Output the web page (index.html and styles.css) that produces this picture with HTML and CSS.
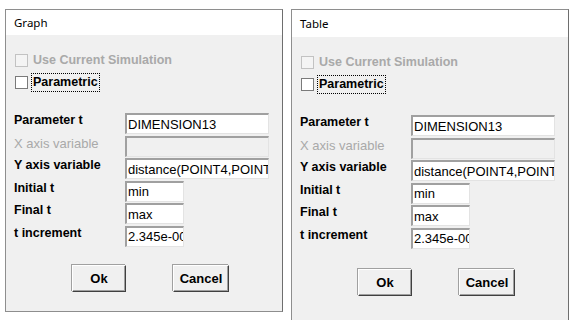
FILE: index.html
```html
<!DOCTYPE html>
<html lang="en">
<head>
    <meta charset="UTF-8">
    <title>Graph / Table</title>
    <link rel="stylesheet" href="styles.css">
</head>
<body>
    <div class="desk">
        <div class="dialog graph">
            <div class="titlebar">Graph</div>
            <div class="body">
                <div class="check disabled"><span class="box"></span><span>Use Current Simulation</span></div>
                <div class="check"><span class="box"></span><span class="focus">Parametric</span></div>
                <div class="fields">
                    <span class="lbl">Parameter t</span>
                    <input class="field" type="text" value="DIMENSION13">
                    <span class="lbl disabled">X axis variable</span>
                    <input class="field off" type="text" value="" disabled>
                    <span class="lbl">Y axis variable</span>
                    <input class="field" type="text" value="distance(POINT4,POINT5)">
                    <span class="lbl">Initial t</span>
                    <input class="field short" type="text" value="min">
                    <span class="lbl">Final t</span>
                    <input class="field short" type="text" value="max">
                    <span class="lbl">t increment</span>
                    <input class="field short" type="text" value="2.345e-005">
                </div>
                <div class="buttons">
                    <button class="btn ok">Ok</button>
                    <button class="btn cancel">Cancel</button>
                </div>
            </div>
        </div>

        <div class="dialog table">
            <div class="titlebar">Table</div>
            <div class="body">
                <div class="check disabled"><span class="box"></span><span>Use Current Simulation</span></div>
                <div class="check"><span class="box"></span><span class="focus">Parametric</span></div>
                <div class="fields">
                    <span class="lbl">Parameter t</span>
                    <input class="field" type="text" value="DIMENSION13">
                    <span class="lbl disabled">X axis variable</span>
                    <input class="field off" type="text" value="" disabled>
                    <span class="lbl">Y axis variable</span>
                    <input class="field" type="text" value="distance(POINT4,POINT5)">
                    <span class="lbl">Initial t</span>
                    <input class="field short" type="text" value="min">
                    <span class="lbl">Final t</span>
                    <input class="field short" type="text" value="max">
                    <span class="lbl">t increment</span>
                    <input class="field short" type="text" value="2.345e-005">
                </div>
                <div class="buttons">
                    <button class="btn ok">Ok</button>
                    <button class="btn cancel">Cancel</button>
                </div>
            </div>
        </div>
    </div>
</body>
</html>
```

FILE: styles.css
```css
body {
    margin: 0;
    background-color: #ffffff;
    font-family: "Liberation Sans", Arial, sans-serif;
    overflow: hidden;
}
.desk {
    display: flex;
    align-items: flex-start;
    padding: 9px 0 0 5px;
    gap: 8px;
    height: 320px;
    box-sizing: border-box;
}
.dialog {
    width: 278px;
    border: 1px solid #8e8e8e;
    box-sizing: border-box;
    display: flex;
    flex-direction: column;
    background-color: #f0f0f0;
}
.graph {
    height: 303px;
    border-right-color: #6e6e6e;
}
.table {
    height: 320px;
    border-right-color: #6e6e6e;
}
.titlebar {
    height: 25px;
    background-color: #ffffff;
    font-family: "Noto Sans", sans-serif;
    font-size: 11.5px;
    line-height: 25px;
    padding-left: 8px;
    color: #000;
}
.table .titlebar {
    height: 27px;
    line-height: 27px;
}
.body {
    padding: 17px 0 0 8px;
    font-size: 12.5px;
}
.check {
    display: flex;
    align-items: center;
    gap: 5px;
    height: 16px;
    line-height: 16px;
    font-weight: bold;
    color: #000;
    margin-bottom: 6px;
}
.check .box {
    width: 11px;
    height: 11px;
    border: 1px solid #7a7a7a;
    background-color: #ffffff;
    margin-left: 1px;
}
.check.disabled {
    color: #a9a9a9;
}
.check.disabled .box {
    border-color: #c2c2c2;
    background-color: #f4f4f4;
}
.focus {
    outline: 1px dotted #000;
    outline-offset: 1px;
    line-height: 15px;
}
.fields {
    display: grid;
    grid-template-columns: 111px auto;
    grid-auto-rows: 21px;
    row-gap: 1.6px;
    margin-top: 23px;
    align-items: start;
}
.lbl {
    font-weight: bold;
    line-height: 15px;
    color: #000;
}
.lbl.disabled {
    font-weight: normal;
    font-size: 13px;
    color: #a9a9a9;
}
.field {
    width: 144px;
    height: 21px;
    box-sizing: border-box;
    margin: 0;
    padding: 0 0 0 1px;
    font-family: "Liberation Sans", Arial, sans-serif;
    font-size: 13px;
    color: #000;
    background-color: #ffffff;
    border-style: solid;
    border-width: 2px 1px 1px 2px;
    border-color: #a0a0a0 #e3e3e3 #e3e3e3 #a0a0a0;
    outline: none;
}
.field.off {
    background-color: #f0f0f0;
}
.field.short {
    width: 59px;
}
.buttons {
    display: flex;
    gap: 47px;
    margin: 18px 0 0 58px;
}
.table .buttons {
    margin-top: 20px;
}
.btn {
    height: 27px;
    padding: 0;
    font-family: "Liberation Sans", Arial, sans-serif;
    font-size: 13px;
    font-weight: bold;
    color: #000;
    background-color: #f0f0f0;
    border-style: solid;
    border-width: 1px;
    border-color: #ffffff #404040 #404040 #ffffff;
    box-shadow: inset -1px -1px 0 #a0a0a0, -1px -1px 0 #a0a0a0;
}
.ok {
    width: 54px;
}
.cancel {
    width: 56px;
}
```
